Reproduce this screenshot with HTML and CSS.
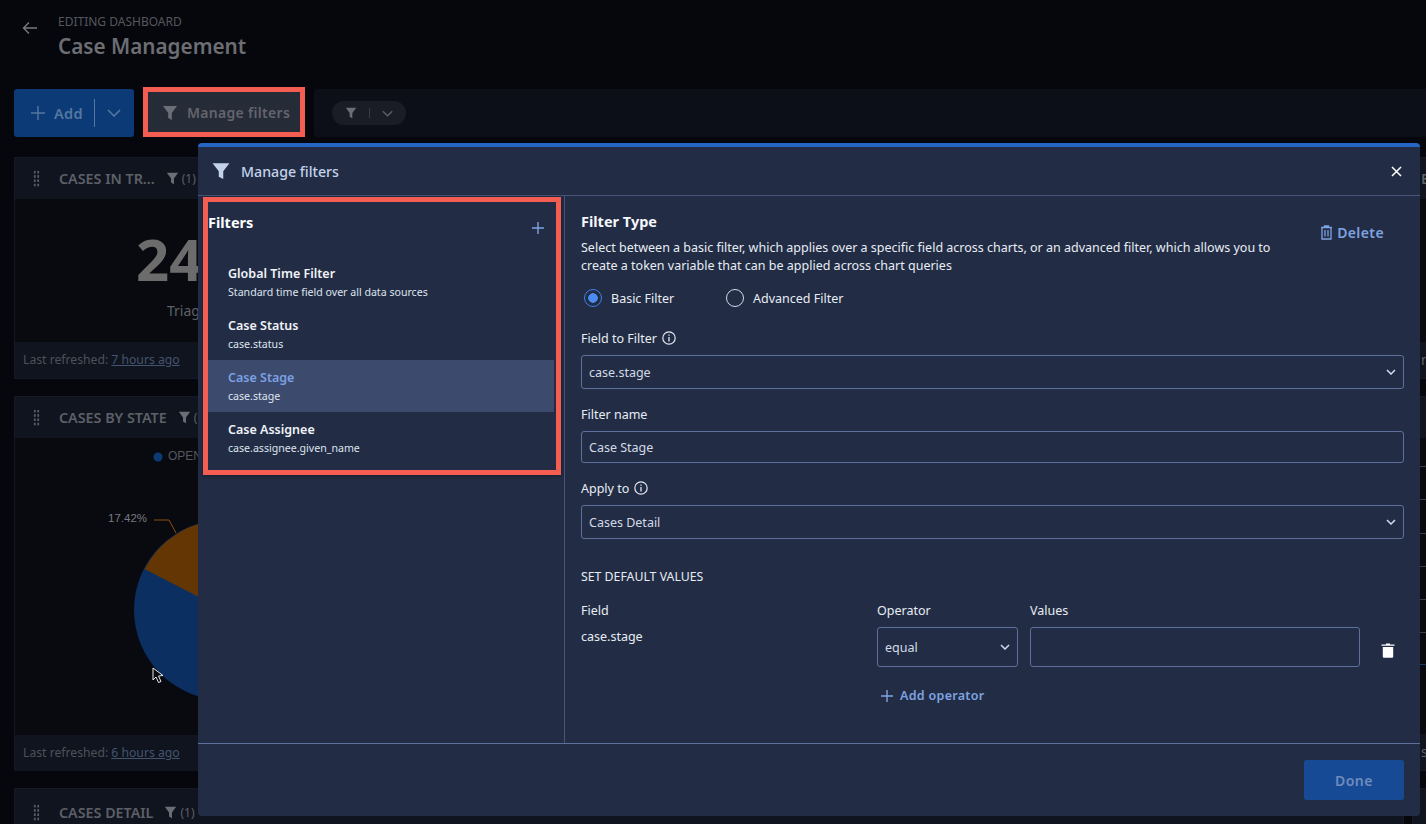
FILE: index.html
```html
<html>
<head>
    <meta name="viewport" content="width=device-width">
    <title>Case Management</title>
    <link rel="stylesheet" href="styles.css">
</head>
<body>

<div class="page">
    <div class="top">
        <svg class="back" width="16" height="14" viewBox="0 0 16 14"><path d="M15 7H2M7 1.500 1.500 7 7 12.500" fill="none" stroke="#77797f" stroke-width="1.400"/></svg>
        <div>
            <div class="eyebrow">EDITING DASHBOARD</div>
            <div class="dash-title">Case Management</div>
        </div>
    </div>

    <div class="toolbar">
        <div class="add-button">
            <svg width="14" height="14" viewBox="0 0 14 14"><path d="M7 0v14M0 7h14" stroke="#54779f" stroke-width="1.400"/></svg>
            <span class="add-text">Add</span>
            <span class="add-line"></span>
            <svg width="14" height="8" viewBox="0 0 14 8"><path d="M1 1l6 6 6-6" fill="none" stroke="#54779f" stroke-width="1.600"/></svg>
        </div>
        <div class="red-box">
            <div class="manage-button">
                <svg width="16" height="16" viewBox="0 0 16 16"><path class="funnel" d="M1 1h14L9.800 8v7l-3.600-2V8z"/></svg>
                <span>Manage filters</span>
            </div>
        </div>
        <div class="filter-bar">
            <div class="filter-pill">
                <svg width="12" height="12" viewBox="0 0 16 16"><path class="funnel" d="M1 1h14L9.800 8v7l-3.600-2V8z"/></svg>
                <span class="pill-line"></span>
                <svg width="11" height="7" viewBox="0 0 14 8"><path d="M1 1l6 6 6-6" fill="none" stroke="#5b5f68" stroke-width="1.800"/></svg>
            </div>
        </div>
    </div>

    <div class="dash-grid">
        <div class="column">
            <div class="card card-one">
                <div class="card-head">
                    <span class="grip"></span>
                    <span class="card-title">CASES IN TR...</span>
                    <svg width="13" height="13" viewBox="0 0 16 16"><path class="funnel" d="M1 1h14L9.800 8v7l-3.600-2V8z"/></svg>
                    <span class="count">(1)</span>
                </div>
                <div class="card-body stat">
                    <div class="stat-num">24</div>
                    <div class="stat-label">Triage</div>
                </div>
                <div class="card-foot">Last refreshed: <u>7 hours ago</u></div>
            </div>

            <div class="card card-two">
                <div class="card-head">
                    <span class="grip"></span>
                    <span class="card-title">CASES BY STATE</span>
                    <svg width="13" height="13" viewBox="0 0 16 16"><path class="funnel" d="M1 1h14L9.800 8v7l-3.600-2V8z"/></svg>
                    <span class="count">(1)</span>
                </div>
                <div class="card-body">
                    <svg class="chart" width="499" height="297" viewBox="15 436 499 297">
                        <circle cx="158" cy="455" r="4.500" fill="#0c3a74"/>
                        <text x="168" y="458" class="legend">OPEN</text>
                        <text x="108" y="520" class="pct">17.42%</text>
                        <path d="M154 518h15l7 13" fill="none" stroke="#8a4f0c"/>
                        <circle cx="224" cy="608" r="90" fill="#0b2f60"/>
                        <path d="M224 608L144.500 567A90 90 0 0 1 224 518z" fill="#633603"/>
                        <path d="M153 666v12l3-3 2.500 5.500 2.500-1-2.500-5.500 4.500-.5z" fill="#0a0b10" stroke="#e8e8e8" stroke-width="1"/>
                    </svg>
                </div>
                <div class="card-foot">Last refreshed: <u>6 hours ago</u></div>
            </div>

            <div class="card">
                <div class="card-head tall-head">
                    <span class="grip"></span>
                    <span class="card-title">CASES DETAIL</span>
                    <svg width="13" height="13" viewBox="0 0 16 16"><path class="funnel" d="M1 1h14L9.800 8v7l-3.600-2V8z"/></svg>
                    <span class="count">(1)</span>
                </div>
            </div>
        </div>

        <div class="column">
            <div class="card card-one">
                <div class="card-head side-head"><span class="card-title">E</span></div>
                <div class="card-body"></div>
                <div class="card-foot side-foot">n</div>
            </div>
            <div class="card card-two">
                <div class="card-head"></div>
                <div class="card-body rows">
                    <div class="row"></div>
                    <div class="row"></div>
                    <div class="row"></div>
                    <div class="row"></div>
                    <div class="row"></div>
                    <div class="row"></div>
                    <div class="row row-blue"></div>
                </div>
                <div class="card-foot side-foot">st</div>
            </div>
            <div class="card"><div class="card-head tall-head"></div></div>
        </div>
    </div>
</div>

<div class="modal">
    <div class="modal-head">
        <svg width="18" height="18" viewBox="0 0 16 16"><path d="M.5 1h15L10 8.200V15l-4-2V8.200z" fill="#c3d2ea"/></svg>
        <span class="modal-title">Manage filters</span>
        <svg class="close" width="11" height="11" viewBox="0 0 11 11"><path d="M1 1l9 9M10 1l-9 9" stroke="#fff" stroke-width="1.500"/></svg>
    </div>

    <div class="modal-main">
        <div class="left-pane">
            <div class="filters-box">
                <div class="filters-top">
                    <span class="filters-title">Filters</span>
                    <svg width="12" height="12" viewBox="0 0 12 12"><path d="M6 0v12M0 6h12" stroke="#7fa3e0" stroke-width="1.400"/></svg>
                </div>
                <div class="filter-item">
                    <div class="item-name">Global Time Filter</div>
                    <div class="item-sub">Standard time field over all data sources</div>
                </div>
                <div class="filter-item">
                    <div class="item-name">Case Status</div>
                    <div class="item-sub">case.status</div>
                </div>
                <div class="filter-item selected">
                    <div class="item-name">Case Stage</div>
                    <div class="item-sub">case.stage</div>
                </div>
                <div class="filter-item">
                    <div class="item-name">Case Assignee</div>
                    <div class="item-sub">case.assignee.given_name</div>
                </div>
            </div>
        </div>

        <div class="right-pane">
            <div class="type-row">
                <div class="type-text">
                    <div class="type-title">Filter Type</div>
                    <p class="type-desc">Select between a basic filter, which applies over a specific field across charts, or an advanced filter, which allows you to create a token variable that can be applied across chart queries</p>
                </div>
                <div class="delete">
                    <svg width="13" height="15" viewBox="0 0 13 15"><path d="M1 2.500h11M4.500 2.500V1h4v1.500M2 2.500V14h9V2.500M5 5v6.500M8 5v6.500" fill="none" stroke="#7fa3e0" stroke-width="1.300"/></svg>
                    <span>Delete</span>
                </div>
            </div>

            <div class="radios">
                <span class="radio checked"></span><span class="radio-text first">Basic Filter</span>
                <span class="radio"></span><span class="radio-text">Advanced Filter</span>
            </div>

            <div class="field-label label-one">Field to Filter
                <svg width="14" height="14" viewBox="0 0 14 14"><circle cx="7" cy="7" r="6.200" fill="none" stroke="#e4e8f0" stroke-width="1.200"/><path d="M7 6v4.500M7 3.400v1.400" stroke="#e4e8f0" stroke-width="1.300"/></svg>
            </div>
            <div class="input select-one">case.stage
                <svg width="10" height="6" viewBox="0 0 10 6"><path d="M1 1l4 4 4-4" fill="none" stroke="#d3dcec" stroke-width="1.500"/></svg>
            </div>

            <div class="field-label label-two">Filter name</div>
            <div class="input input-two">Case Stage</div>

            <div class="field-label label-two">Apply to
                <svg width="14" height="14" viewBox="0 0 14 14"><circle cx="7" cy="7" r="6.200" fill="none" stroke="#e4e8f0" stroke-width="1.200"/><path d="M7 6v4.500M7 3.400v1.400" stroke="#e4e8f0" stroke-width="1.300"/></svg>
            </div>
            <div class="input select-one">Cases Detail
                <svg width="10" height="6" viewBox="0 0 10 6"><path d="M1 1l4 4 4-4" fill="none" stroke="#d3dcec" stroke-width="1.500"/></svg>
            </div>

            <div class="defaults-title">SET DEFAULT VALUES</div>

            <div class="defaults">
                <div class="col-field">
                    <div class="col-label">Field</div>
                    <div class="field-value">case.stage</div>
                </div>
                <div class="col-op">
                    <div class="col-label">Operator</div>
                    <div class="input op-input">equal
                        <svg width="10" height="6" viewBox="0 0 10 6"><path d="M1 1l4 4 4-4" fill="none" stroke="#d3dcec" stroke-width="1.500"/></svg>
                    </div>
                    <div class="add-op">
                        <svg width="12" height="12" viewBox="0 0 12 12"><path d="M6 0v12M0 6h12" stroke="#7fa3e0" stroke-width="1.400"/></svg>
                        <span>Add operator</span>
                    </div>
                </div>
                <div class="col-val">
                    <div class="col-label">Values</div>
                    <div class="input val-input"></div>
                </div>
                <svg class="bin" width="14" height="15" viewBox="0 0 14 15"><path d="M5 1.500V.5h4v1h4.500v1.300H.5V1.500zM1.800 4h10.400v9.500q0 1.200-1.200 1.200H3q-1.200 0-1.200-1.200z" fill="#fff"/></svg>
            </div>
        </div>
    </div>

    <div class="modal-foot">
        <div class="done">Done</div>
    </div>
</div>

</body>
</html>
```

FILE: styles.css
```css
* {
    box-sizing: border-box;
}

body {
    margin: 0;
    padding: 0;
    overflow: hidden;
    height: 824px;
    background: #06070c;
    font-family: "Noto Sans", "Liberation Sans", sans-serif;
}

.page {
    padding: 0 0 0 14px;
}

.funnel {
    fill: #6b6e75;
}

.top {
    display: flex;
    height: 89px;
    padding-top: 14px;
    gap: 20px;
}

.back {
    margin: 7px 0 0 8px;
}

.eyebrow {
    font-size: 12px;
    line-height: 15px;
    color: #55575d;
}

.dash-title {
    font-size: 20.700px;
    font-weight: 600;
    line-height: 30px;
    color: #6c6e73;
    margin-top: 2px;
}

.toolbar {
    display: flex;
    height: 48px;
}

.add-button {
    display: flex;
    align-items: center;
    width: 120px;
    height: 48px;
    padding-left: 17px;
    background: #0c3a76;
    border-radius: 3px;
}

.add-text {
    margin-left: 9px;
    font-size: 14.500px;
    font-weight: 600;
    letter-spacing: 0.3px;
    color: #54779f;
}

.add-line {
    width: 1px;
    height: 28px;
    margin: 0 12px 0 11px;
    background: #54779f;
}

.red-box {
    width: 162px;
    height: 50px;
    margin: -2px 9px 0 9px;
    border: 5px solid #f45d52;
}

.manage-button {
    display: flex;
    align-items: center;
    height: 100%;
    gap: 9px;
    padding: 1px 0 0 14px;
    background: #262b38;
    font-size: 14px;
    font-weight: 600;
    letter-spacing: 0.3px;
    color: #62656d;
    white-space: nowrap;
}

.filter-bar {
    flex: 1;
    display: flex;
    align-items: center;
    padding-left: 18px;
    background: #0c0f18;
    border-radius: 3px 0 0 3px;
}

.filter-pill {
    display: flex;
    align-items: center;
    width: 74px;
    height: 24px;
    padding-left: 13px;
    background: #1a1d26;
    border-radius: 12px;
}

.pill-line {
    width: 1px;
    height: 10px;
    margin: 0 12px;
    background: #3a3d45;
}

.dash-grid {
    display: grid;
    grid-template-columns: 1390px 400px;
    column-gap: 8px;
    margin-top: 20px;
}

.column {
    display: flex;
    flex-direction: column;
    gap: 17px;
}

.card {
    display: flex;
    flex-direction: column;
    border: 1px solid #141925;
    background: #090a10;
}

.card-one {
    height: 222px;
}

.card-two {
    height: 375px;
}

.card-head {
    display: flex;
    align-items: center;
    flex: none;
    height: 41px;
    padding-left: 18px;
    background: #10141f;
}

.tall-head {
    height: 47px;
}

.grip {
    width: 7px;
    height: 17px;
    margin-right: 19px;
    background-image: radial-gradient(circle, #5a5d64 1px, transparent 1.300px);
    background-size: 3.500px 4.300px;
}

.card-title {
    margin-right: 11px;
    font-size: 14.300px;
    font-weight: 600;
    color: #5d6067;
    white-space: nowrap;
}

.count {
    margin-left: 3px;
    font-size: 12px;
    color: #5d6067;
}

.side-head {
    padding-left: 8px;
}

.card-body {
    flex: 1;
}

.stat {
    padding: 21px 0 0 121px;
}

.stat-num {
    font-size: 58px;
    font-weight: 700;
    line-height: 78px;
    color: #6c6c6c;
}

.stat-label {
    margin: 3px 0 0 31px;
    font-size: 14px;
    color: #5d6067;
}

.card-foot {
    flex: none;
    height: 36px;
    padding-left: 8px;
    background: #10141f;
    font-size: 12.200px;
    line-height: 36px;
    color: #4e5158;
}

.card-foot u {
    color: #43556e;
}

.side-foot {
    font-size: 14px;
    color: #5d6067;
}

.chart {
    display: block;
}

.legend {
    font-family: "Liberation Sans", sans-serif;
    font-size: 12px;
    fill: #55575d;
}

.pct {
    font-family: "Liberation Sans", sans-serif;
    font-size: 11.500px;
    fill: #77797f;
}

.rows {
    padding-top: 28px;
}

.row {
    height: 33.300px;
    border-top: 1px solid #3a3d45;
}

.row-blue {
    height: 20px;
    margin-top: -2px;
    border-top: 1px solid #16396a;
}

.modal {
    position: absolute;
    left: 198px;
    top: 143px;
    width: 1222px;
    height: 673px;
    display: flex;
    flex-direction: column;
    background: #222d45;
    border-top: 4px solid #2565c4;
    border-radius: 4px;
    color: #e8ecf3;
}

.modal-head {
    display: flex;
    align-items: center;
    flex: none;
    height: 49px;
    padding: 0 18px 0 14px;
    border-bottom: 1px solid #48557a;
}

.modal-title {
    flex: 1;
    margin-left: 11px;
    font-size: 14.200px;
    font-weight: 500;
    color: #c3d2ea;
}

.modal-main {
    display: flex;
    flex: 1;
    min-height: 0;
}

.left-pane {
    flex: none;
    width: 367px;
    padding: 1px 0 0 5px;
    border-right: 1px solid #48557a;
}

.filters-box {
    width: 358px;
    height: 278px;
    border: 5px solid #f45d52;
    box-shadow: 0 1px 4px rgba(0, 0, 0, 0.4);
    padding-right: 2px;
}

.filters-top {
    display: flex;
    justify-content: space-between;
    height: 54px;
    padding: 10px 10px 0 0;
}

.filters-top svg {
    margin-top: 10px;
}

.filters-title {
    font-size: 14.500px;
    font-weight: 700;
    color: #fff;
}

.filter-item {
    height: 52px;
    padding: 9px 0 0 20px;
}

.item-name {
    font-size: 12.500px;
    font-weight: 600;
    line-height: 18px;
    color: #f0f3f8;
}

.item-sub {
    font-size: 10.600px;
    line-height: 19px;
    color: #dfe4ee;
}

.selected {
    background: #3c4a6d;
}

.selected .item-name {
    color: #7ba2e4;
}

.right-pane {
    flex: 1;
    padding: 15px 16px 0 16px;
}

.type-row {
    display: flex;
    justify-content: space-between;
}

.type-text {
    width: 700px;
}

.type-title {
    font-size: 14.500px;
    font-weight: 700;
    line-height: 20px;
    color: #f5f7fb;
}

.type-desc {
    margin: 8px 0 0 0;
    font-size: 12.500px;
    line-height: 18px;
}

.delete {
    display: flex;
    align-items: center;
    gap: 4px;
    height: 20px;
    margin: 11px 20px 0 0;
    font-size: 14px;
    font-weight: 600;
    letter-spacing: 0.4px;
    color: #7fa3e0;
}

.radios {
    display: flex;
    align-items: center;
    margin: 14px 0 0 3px;
    font-size: 12.500px;
}

.radio {
    width: 18px;
    height: 18px;
    border: 1px solid #d4d9e4;
    border-radius: 50%;
}

.checked {
    border-color: #3f80e8;
    background: radial-gradient(circle, #4c8bf0 4.500px, transparent 5px);
}

.radio-text {
    margin-left: 9px;
}

.first {
    width: 115px;
}

.field-label {
    display: flex;
    align-items: center;
    gap: 5px;
    height: 18px;
    margin-bottom: 8px;
    font-size: 12.500px;
}

.label-one {
    margin-top: 22px;
}

.label-two {
    margin-top: 16px;
}

.input {
    display: flex;
    align-items: center;
    justify-content: space-between;
    padding: 0 7px;
    border: 1px solid #5f6f9b;
    border-radius: 3px;
    font-size: 12.500px;
    color: #d3dae6;
}

.select-one {
    height: 34px;
}

.input-two {
    height: 32px;
}

.defaults-title {
    margin-top: 30px;
    font-size: 12.300px;
    line-height: 16px;
}

.defaults {
    display: flex;
    margin-top: 18px;
}

.col-label {
    height: 18px;
    font-size: 12.500px;
    line-height: 16px;
}

.col-field {
    width: 296px;
}

.field-value {
    margin-top: 7px;
    font-size: 12.500px;
    line-height: 18px;
}

.col-op {
    width: 141px;
    margin-right: 12px;
}

.op-input {
    width: 141px;
    height: 40px;
    margin-top: 6px;
}

.add-op {
    display: flex;
    align-items: center;
    gap: 7px;
    margin: 20px 0 0 4px;
    font-size: 12.500px;
    font-weight: 600;
    letter-spacing: 0.3px;
    color: #7fa3e0;
    white-space: nowrap;
}

.col-val {
    width: 330px;
}

.val-input {
    height: 40px;
    margin-top: 6px;
}

.bin {
    margin: 40px 0 0 21px;
}

.modal-foot {
    display: flex;
    justify-content: flex-end;
    flex: none;
    height: 73px;
    padding: 16px 16px 0 0;
    border-top: 1px solid #5f6f9b;
}

.done {
    width: 100px;
    height: 40px;
    background: #174a94;
    border-radius: 3px;
    font-size: 14px;
    font-weight: 600;
    letter-spacing: 0.5px;
    line-height: 41px;
    text-align: center;
    color: #6e8bbc;
}
```
